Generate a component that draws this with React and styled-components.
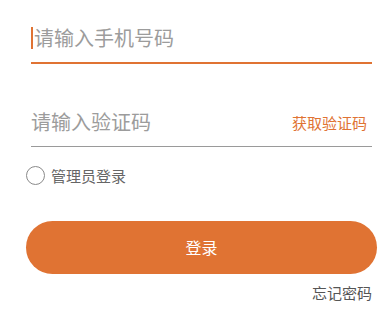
import styled, { createGlobalStyle } from "styled-components";

const Global = createGlobalStyle`
	body {
		margin: 0;
		background: #fff;
		font-family: "Noto Sans CJK SC", "Noto Sans", sans-serif;
	}
`;

const ORANGE = "#e07333";

export default function App() {
	return (
		<Page>
			<Global />
			<Field $active>
				<Caret />
				<Placeholder>请输入手机号码</Placeholder>
			</Field>
			<Field>
				<Placeholder>请输入验证码</Placeholder>
				<CodeLink>获取验证码</CodeLink>
			</Field>
			<CheckRow>
				<Radio />
				<span>管理员登录</span>
			</CheckRow>
			<LoginButton>登录</LoginButton>
			<Forgot>忘记密码</Forgot>
		</Page>
	);
}

const Page = styled.div`
	width: 392px;
	height: 319px;
	display: flex;
	flex-direction: column;
	box-sizing: border-box;
	padding-top: 14px;
`;

const Field = styled.div`
	display: flex;
	align-items: center;
	height: 48px;
	margin: ${(p) => (p.$active ? "0" : "34px")} 20px 0 31px;
	border-bottom: ${(p) => (p.$active ? `2px solid ${ORANGE}` : "1.5px solid #9a9a9a")};
`;

const Caret = styled.span`
	width: 2px;
	height: 22px;
	background: ${ORANGE};
	margin-right: 1px;
`;

const Placeholder = styled.span`
	flex: 1;
	font-size: 20px;
	line-height: 24px;
	color: #9c9c9c;
`;

const CodeLink = styled.span`
	font-size: 15px;
	color: ${ORANGE};
	margin-right: 5px;
`;

const CheckRow = styled.div`
	display: flex;
	align-items: center;
	gap: 6px;
	margin: 18px 0 0 26px;
	height: 20px;
	font-size: 15px;
	color: #666;
`;

const Radio = styled.span`
	width: 17px;
	height: 17px;
	border: 1.5px solid #8a8a8a;
	border-radius: 50%;
`;

const LoginButton = styled.button`
	margin: 36px 0 0 26px;
	width: 351px;
	height: 53px;
	border: none;
	border-radius: 27px;
	background: ${ORANGE};
	color: #fff;
	font-family: inherit;
	font-size: 16px;
	padding-bottom: 3px;
`;

const Forgot = styled.div`
	align-self: flex-end;
	margin: 9px 20px 0 0;
	font-size: 15px;
	line-height: 20px;
	color: #555;
`;
